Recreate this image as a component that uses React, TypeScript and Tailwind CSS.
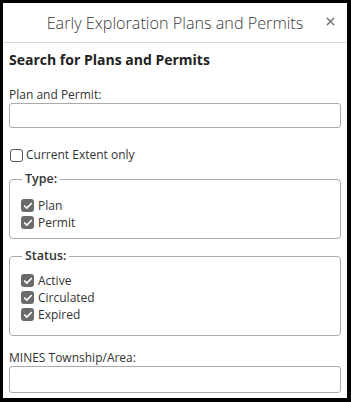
import { Check, X } from "lucide-react";

const font = { fontFamily: '"Open Sans", "Noto Sans", sans-serif' };

export default function App() {
  return (
    <div className="w-[351px] h-[402px] bg-black pt-[3px] pl-[3px] pr-[4px] pb-[4px]" style={font}>
      <div className="h-full bg-white flex flex-col text-[#333] overflow-hidden">
        <header className="h-[40px] shrink-0 flex items-center justify-center border-b border-[#d6d6d6] relative">
          <div className="text-[16.2px] font-light text-[#3a3a3a] leading-[20px]">Early Exploration Plans and Permits</div>
          <X className="absolute right-[10px] top-[12px] w-[13px] h-[13px] text-[#7a7a7a]" strokeWidth={3} />
        </header>
        <div className="px-[6px] pt-[7px]">
          <h2 className="text-[14px] font-bold text-[#222] leading-[20px]">Search for Plans and Permits</h2>
          <label className="block mt-[17px] text-[12px] leading-[16px]">Plan and Permit:</label>
          <div className="h-[25px] border border-[#aaa] rounded-[3px]" />
          <div className="mt-[19px] h-[16px] flex items-center gap-[3px] text-[12px]">
            <span className="w-[13px] h-[13px] border border-[#555] rounded-[3px] bg-white ml-[1px]" />
            <span>Current Extent only</span>
          </div>
          <FieldGroup legend="Type:" items={["Plan", "Permit"]} className="mt-[9px] pb-[7px]" inner="pt-[11px]" />
          <FieldGroup legend="Status:" items={["Active", "Circulated", "Expired"]} className="mt-[10px] pb-[12px]" inner="pt-[9px]" />
          <label className="block mt-[14px] text-[12px] leading-[16px]">MINES Township/Area:</label>
          <div className="h-[27px] border border-[#aaa] rounded-[3px]" />
        </div>
      </div>
    </div>
  );
}

const FieldGroup = ({
  legend,
  items,
  className,
  inner,
}: {
  legend: string;
  items: string[];
  className: string;
  inner: string;
}) => (
  <fieldset className={`border border-[#aaa] rounded-[4px] px-[11px] ${className}`}>
    <legend className="px-[3px] ml-[1px] text-[12.5px] font-semibold leading-[14px]">{legend}</legend>
    <div className={`flex flex-col ${inner}`}>
      {items.map((it) => (
        <div key={it} className="flex items-center gap-[4px] h-[17px] text-[12px]">
          <span className="w-[13px] h-[13px] rounded-[3px] bg-[#6b6b6b] flex items-center justify-center">
            <Check className="w-[10px] h-[10px] text-white" strokeWidth={4} />
          </span>
          <span>{it}</span>
        </div>
      ))}
    </div>
  </fieldset>
);
